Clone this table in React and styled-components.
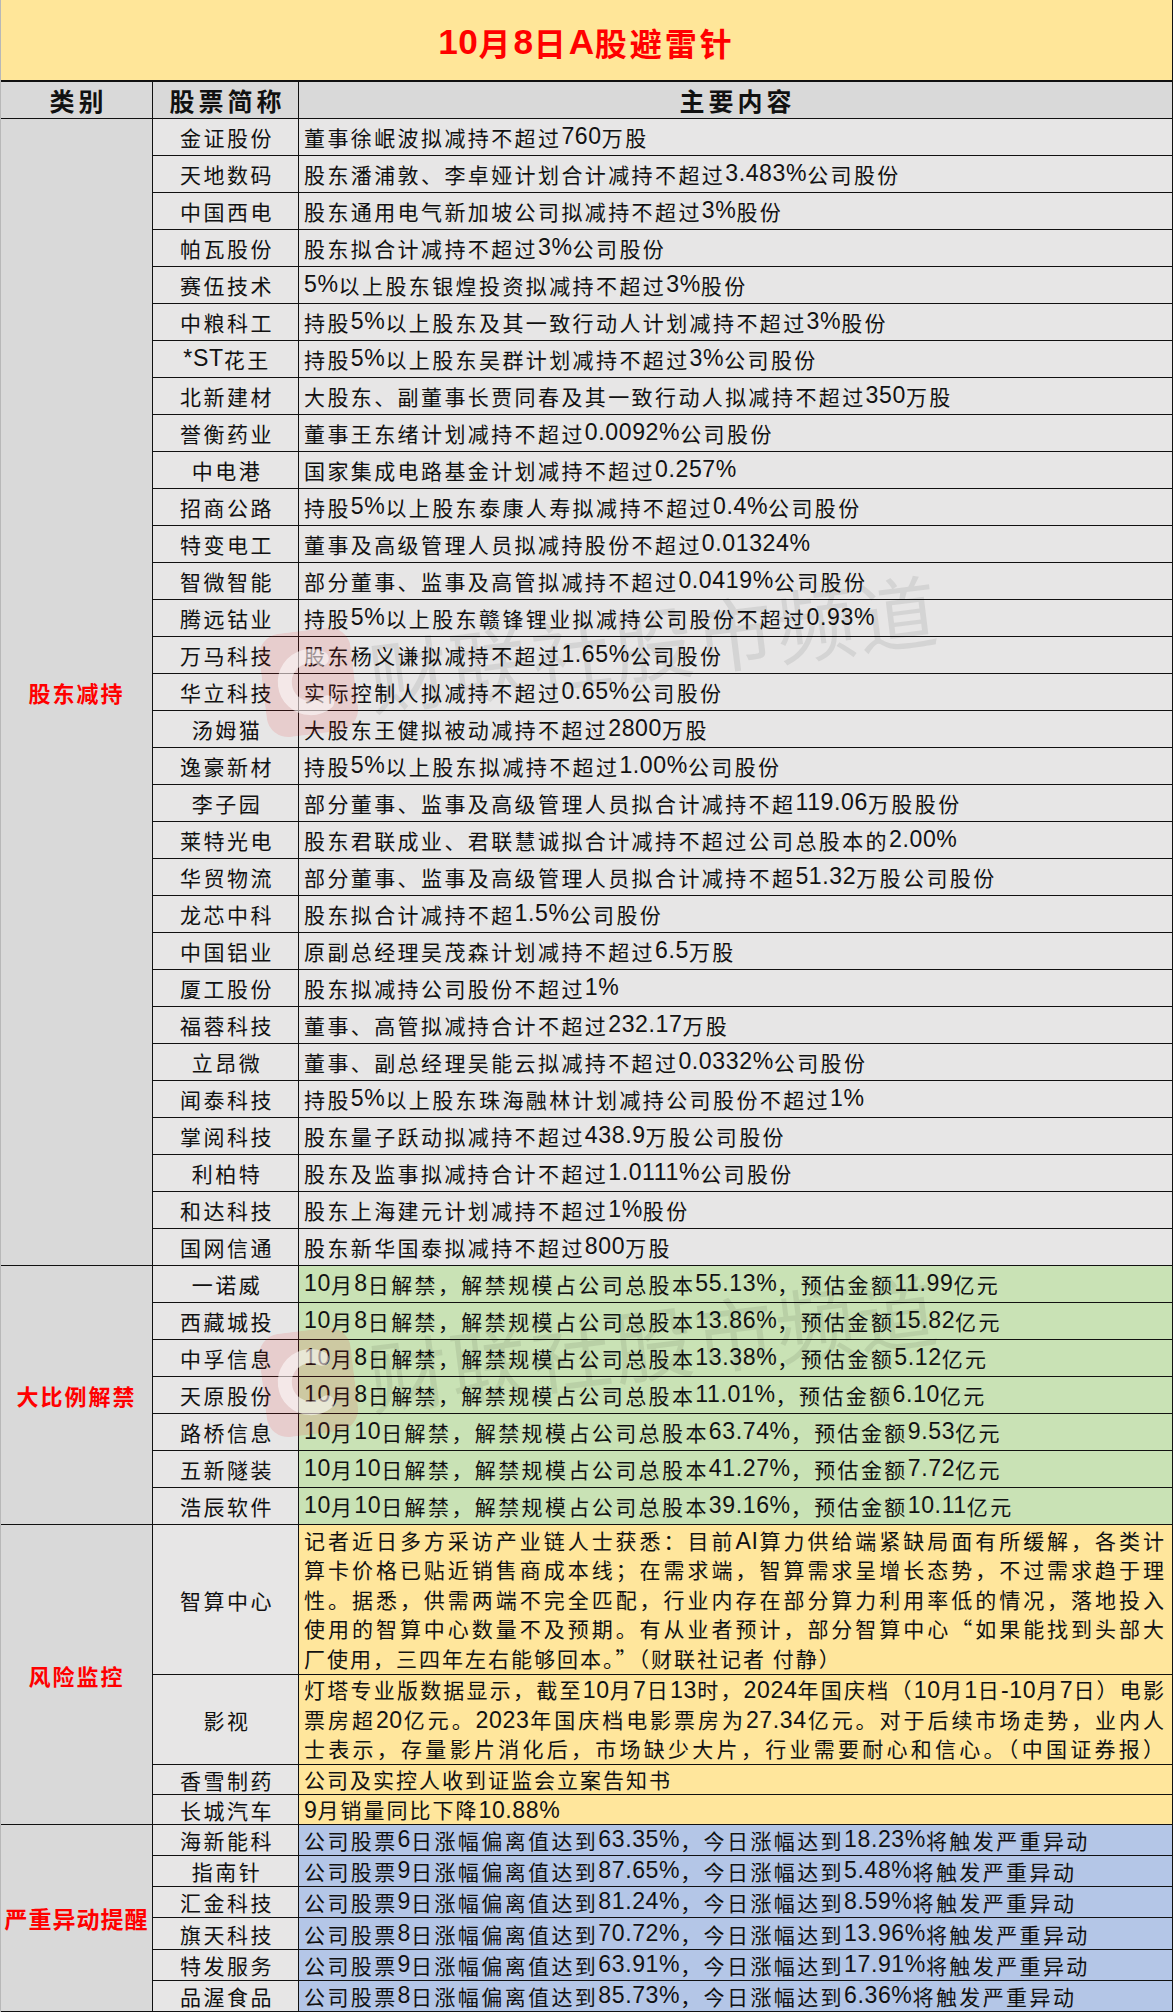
import React from "react";
import styled, { createGlobalStyle } from "styled-components";

const CJK = `"Noto Sans CJK SC", "Noto Sans CJK JP", sans-serif`;
const LATIN = `"Liberation Sans Narrow", "Liberation Sans", "Noto Sans CJK SC", sans-serif`;

const GlobalStyle = createGlobalStyle`
  html, body {
    margin: 0;
    padding: 0;
    background: #fff;
  }
  body {
    font-family: ${CJK};
    color: #111;
  }
`;

const TONES = {
  gray: "#E7E6E6",
  green: "#C9E2B5",
  yellow: "#FFE69C",
  blue: "#B4C6E7",
};

const Sheet = styled.div`
  position: relative;
  width: 1173px;
  box-sizing: border-box;
  border-left: 1px solid #b8b8b8;
  border-right: 1px solid #111;
  overflow: hidden;
`;

const TitleBar = styled.div`
  height: 82px;
  box-sizing: border-box;
  padding-top: 4px;
  background: #ffe699;
  border-bottom: 2px solid #111;
  display: flex;
  align-items: center;
  justify-content: center;
  color: #ff0000;
  font-size: 32px;
  font-weight: 700;
  letter-spacing: 3px;
`;

const HeadRow = styled.div`
  display: grid;
  grid-template-columns: 152px 146px 1fr;
  height: 37px;
  box-sizing: border-box;
  background: #d9d9d9;
  border-bottom: 1px solid #111;
`;

const HeadCell = styled.div`
  display: flex;
  align-items: center;
  justify-content: center;
  font-size: 25px;
  font-weight: 700;
  letter-spacing: 4px;
  padding-left: 4px;
  border-right: 1px solid #111;
  &:last-child {
    border-right: none;
  }
`;

const Section = styled.div`
  display: grid;
  grid-template-columns: 152px 1fr;
`;

const Label = styled.div`
  display: flex;
  align-items: center;
  justify-content: center;
  background: #d9d9d9;
  border-right: 1px solid #111;
  border-bottom: 1px solid #111;
  color: #ff0000;
  font-size: ${(p) => p.size || 22}px;
  font-weight: 700;
  letter-spacing: ${(p) => (p.size ? 1 : 2)}px;
  white-space: nowrap;
`;

const Rows = styled.div`
  display: flex;
  flex-direction: column;
`;

const Row = styled.div`
  flex: none;
  display: grid;
  grid-template-columns: 146px 1fr;
  height: ${(p) => p.h}px;
  box-sizing: border-box;
  border-bottom: 1px solid #111;
  overflow: hidden;
`;

const Name = styled.div`
  display: flex;
  align-items: center;
  justify-content: center;
  padding-left: 3px;
  background: #e7e6e6;
  border-right: 1px solid #111;
  font-size: 21px;
  letter-spacing: 2.5px;
  white-space: nowrap;
`;

const Content = styled.div`
  display: flex;
  align-items: center;
  padding-left: 5px;
  background: ${(p) => TONES[p.tone]};
  font-size: 21px;
  letter-spacing: 2.4px;
  white-space: nowrap;
`;

const Para = styled.div`
  display: flex;
  flex-direction: column;
  justify-content: center;
  padding: 0 6px 0 5px;
  background: ${(p) => TONES[p.tone]};
  font-size: 21px;
  letter-spacing: 2px;
`;

const Line = styled.div`
  height: 29.6px;
  line-height: 29.6px;
  text-align: justify;
  text-align-last: ${(p) => (p.loose ? "left" : "justify")};
  white-space: nowrap;
`;

const Num = styled.span`
  font-family: ${LATIN};
  font-size: 1.1em;
  line-height: 1;
  letter-spacing: 0.6px;
`;

const Watermark = styled.div`
  position: absolute;
  left: ${(p) => p.x}px;
  top: ${(p) => p.y}px;
  display: flex;
  align-items: center;
  gap: 14px;
  transform: rotate(-7deg);
  transform-origin: left center;
  pointer-events: none;
`;

const WmText = styled.span`
  font-size: 80px;
  letter-spacing: 2px;
  color: rgba(0, 0, 0, 0.08);
  white-space: nowrap;
`;

const rich = (s) =>
  s.split(/([\x21-\x7e]+)/).map((part, i) =>
    /^[\x21-\x7e]+$/.test(part) ? <Num key={i}>{part}</Num> : part
  );

const reduce = [
  ["金证股份", "董事徐岷波拟减持不超过760万股"],
  ["天地数码", "股东潘浦敦、李卓娅计划合计减持不超过3.483%公司股份"],
  ["中国西电", "股东通用电气新加坡公司拟减持不超过3%股份"],
  ["帕瓦股份", "股东拟合计减持不超过3%公司股份"],
  ["赛伍技术", "5%以上股东银煌投资拟减持不超过3%股份"],
  ["中粮科工", "持股5%以上股东及其一致行动人计划减持不超过3%股份"],
  ["*ST花王", "持股5%以上股东吴群计划减持不超过3%公司股份"],
  ["北新建材", "大股东、副董事长贾同春及其一致行动人拟减持不超过350万股"],
  ["誉衡药业", "董事王东绪计划减持不超过0.0092%公司股份"],
  ["中电港", "国家集成电路基金计划减持不超过0.257%"],
  ["招商公路", "持股5%以上股东泰康人寿拟减持不超过0.4%公司股份"],
  ["特变电工", "董事及高级管理人员拟减持股份不超过0.01324%"],
  ["智微智能", "部分董事、监事及高管拟减持不超过0.0419%公司股份"],
  ["腾远钴业", "持股5%以上股东赣锋锂业拟减持公司股份不超过0.93%"],
  ["万马科技", "股东杨义谦拟减持不超过1.65%公司股份"],
  ["华立科技", "实际控制人拟减持不超过0.65%公司股份"],
  ["汤姆猫", "大股东王健拟被动减持不超过2800万股"],
  ["逸豪新材", "持股5%以上股东拟减持不超过1.00%公司股份"],
  ["李子园", "部分董事、监事及高级管理人员拟合计减持不超119.06万股股份"],
  ["莱特光电", "股东君联成业、君联慧诚拟合计减持不超过公司总股本的2.00%"],
  ["华贸物流", "部分董事、监事及高级管理人员拟合计减持不超51.32万股公司股份"],
  ["龙芯中科", "股东拟合计减持不超1.5%公司股份"],
  ["中国铝业", "原副总经理吴茂森计划减持不超过6.5万股"],
  ["厦工股份", "股东拟减持公司股份不超过1%"],
  ["福蓉科技", "董事、高管拟减持合计不超过232.17万股"],
  ["立昂微", "董事、副总经理吴能云拟减持不超过0.0332%公司股份"],
  ["闻泰科技", "持股5%以上股东珠海融林计划减持公司股份不超过1%"],
  ["掌阅科技", "股东量子跃动拟减持不超过438.9万股公司股份"],
  ["利柏特", "股东及监事拟减持合计不超过1.0111%公司股份"],
  ["和达科技", "股东上海建元计划减持不超过1%股份"],
  ["国网信通", "股东新华国泰拟减持不超过800万股"],
];

const unlock = [
  ["一诺威", "10月8日解禁，解禁规模占公司总股本55.13%，预估金额11.99亿元"],
  ["西藏城投", "10月8日解禁，解禁规模占公司总股本13.86%，预估金额15.82亿元"],
  ["中孚信息", "10月8日解禁，解禁规模占公司总股本13.38%，预估金额5.12亿元"],
  ["天原股份", "10月8日解禁，解禁规模占公司总股本11.01%，预估金额6.10亿元"],
  ["路桥信息", "10月10日解禁，解禁规模占公司总股本63.74%，预估金额9.53亿元"],
  ["五新隧装", "10月10日解禁，解禁规模占公司总股本41.27%，预估金额7.72亿元"],
  ["浩辰软件", "10月10日解禁，解禁规模占公司总股本39.16%，预估金额10.11亿元"],
];

// loose: how many trailing lines are left-aligned instead of justified
const risk = [
  {
    name: "智算中心",
    h: 150,
    loose: 1,
    lines: [
      "记者近日多方采访产业链人士获悉：目前AI算力供给端紧缺局面有所缓解，各类计",
      "算卡价格已贴近销售商成本线；在需求端，智算需求呈增长态势，不过需求趋于理",
      "性。据悉，供需两端不完全匹配，行业内存在部分算力利用率低的情况，落地投入",
      "使用的智算中心数量不及预期。有从业者预计，部分智算中心“如果能找到头部大",
      "厂使用，三四年左右能够回本。”（财联社记者 付静）",
    ],
  },
  {
    name: "影视",
    h: 90,
    loose: 0,
    lines: [
      "灯塔专业版数据显示，截至10月7日13时，2024年国庆档（10月1日-10月7日）电影",
      "票房超20亿元。2023年国庆档电影票房为27.34亿元。对于后续市场走势，业内人",
      "士表示，存量影片消化后，市场缺少大片，行业需要耐心和信心。（中国证券报）",
    ],
  },
  { name: "香雪制药", h: 30, loose: 1, lines: ["公司及实控人收到证监会立案告知书"] },
  { name: "长城汽车", h: 30, loose: 1, lines: ["9月销量同比下降10.88%"] },
];

const alerts = [
  ["海新能科", "公司股票6日涨幅偏离值达到63.35%，今日涨幅达到18.23%将触发严重异动"],
  ["指南针", "公司股票9日涨幅偏离值达到87.65%，今日涨幅达到5.48%将触发严重异动"],
  ["汇金科技", "公司股票9日涨幅偏离值达到81.24%，今日涨幅达到8.59%将触发严重异动"],
  ["旗天科技", "公司股票8日涨幅偏离值达到70.72%，今日涨幅达到13.96%将触发严重异动"],
  ["特发服务", "公司股票9日涨幅偏离值达到63.91%，今日涨幅达到17.91%将触发严重异动"],
  ["品渥食品", "公司股票8日涨幅偏离值达到85.73%，今日涨幅达到6.36%将触发严重异动"],
];
const alertHeights = [31, 31, 31, 32, 31, 31];

const Logo = () => (
  <svg width="92" height="104" viewBox="0 0 92 104">
    <rect x="0" y="0" width="92" height="104" rx="22" fill="rgba(230,40,40,0.13)" />
    <path
      d="M62 30 A26 26 0 1 0 62 74"
      fill="none"
      stroke="rgba(255,255,255,0.55)"
      strokeWidth="14"
      strokeLinecap="round"
    />
  </svg>
);

const SimpleSection = ({ label, rows, tone, heights, h = 37, size }) => (
  <Section>
    <Label size={size}>{label}</Label>
    <Rows>
      {rows.map(([name, text], i) => (
        <Row key={name} h={heights ? heights[i] : h}>
          <Name>{rich(name)}</Name>
          <Content tone={tone}>{rich(text)}</Content>
        </Row>
      ))}
    </Rows>
  </Section>
);

const App = () => {
  return (
    <>
      <GlobalStyle />
      <Sheet>
        <TitleBar>{rich("10月8日A股避雷针")}</TitleBar>
        <HeadRow>
          <HeadCell>类别</HeadCell>
          <HeadCell>股票简称</HeadCell>
          <HeadCell>主要内容</HeadCell>
        </HeadRow>

        <SimpleSection label="股东减持" rows={reduce} tone="gray" />
        <SimpleSection label="大比例解禁" rows={unlock} tone="green" />

        <Section>
          <Label>风险监控</Label>
          <Rows>
            {risk.map((r) => (
              <Row key={r.name} h={r.h}>
                <Name>{r.name}</Name>
                <Para tone="yellow">
                  {r.lines.map((l, i) => (
                    <Line key={i} loose={i >= r.lines.length - r.loose}>
                      {rich(l)}
                    </Line>
                  ))}
                </Para>
              </Row>
            ))}
          </Rows>
        </Section>

        <SimpleSection
          label="严重异动提醒"
          rows={alerts}
          tone="blue"
          heights={alertHeights}
          size={23}
        />

        <Watermark x={262} y={630}>
          <Logo />
          <WmText>财联社股市频道</WmText>
        </Watermark>
        <Watermark x={262} y={1330}>
          <Logo />
          <WmText>财联社股市频道</WmText>
        </Watermark>
      </Sheet>
    </>
  );
};

export default App;
